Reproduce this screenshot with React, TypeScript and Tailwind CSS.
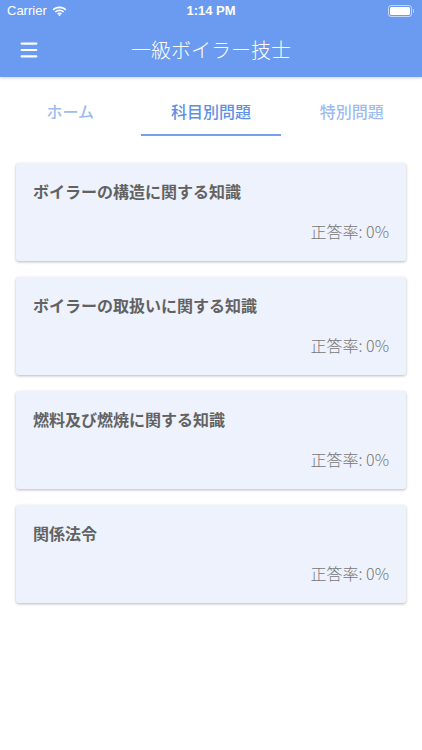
import { Menu } from "lucide-react";

const subjects = [
  "ボイラーの構造に関する知識",
  "ボイラーの取扱いに関する知識",
  "燃料及び燃焼に関する知識",
  "関係法令",
];

const font = {
  fontFamily: '"Noto Sans CJK JP", "Noto Sans", sans-serif',
};

function StatusBar() {
  return (
    <div className="relative flex h-[22px] items-center px-[7px] text-white">
      <div className="flex items-center gap-[5px] text-[13px]" style={{ fontFamily: '"Liberation Sans", sans-serif' }}>
        <span>Carrier</span>
        <svg width="15" height="11" viewBox="0 0 15 11" fill="white">
          <path d="M7.5 2.2c2.2 0 4.2.8 5.7 2.2l1.2-1.2C12.6 1.4 10.2.4 7.5.4S2.4 1.4.6 3.2l1.2 1.2C3.3 3 5.3 2.2 7.5 2.2z" />
          <path d="M7.5 5.2c1.4 0 2.6.5 3.6 1.4l1.2-1.2C11 4.1 9.3 3.4 7.5 3.4S4 4.1 2.7 5.4l1.2 1.2c1-.9 2.2-1.4 3.6-1.4z" />
          <path d="M7.5 8.2c.6 0 1.1.2 1.5.6L7.5 10.3 6 8.8c.4-.4.9-.6 1.5-.6z" />
          <path d="M7.5 6.6c1 0 1.9.4 2.5 1L9 8.6c-.4-.4-.9-.6-1.5-.6s-1.1.2-1.5.6l-1-1c.6-.6 1.5-1 2.5-1z" />
        </svg>
      </div>
      <div
        className="absolute left-0 right-0 text-center text-[13px] font-semibold"
        style={{ fontFamily: '"Liberation Sans", sans-serif' }}
      >
        1:14 PM
      </div>
      <div className="ml-auto flex items-center pr-[1px]">
        <div className="flex h-[12px] w-[24px] items-center rounded-[3px] border border-white/60 p-[1px]">
          <div className="h-full w-full rounded-[1.5px] bg-white" />
        </div>
        <div className="ml-[1px] h-[4px] w-[1.5px] rounded-r bg-white/60" />
      </div>
    </div>
  );
}

export default function App() {
  return (
    <div className="min-h-[750px] w-[422px] bg-white" style={font}>
      <div className="bg-[#6a9bf0] shadow-[0_1px_3px_rgba(0,0,0,0.18)]">
        <StatusBar />
        <div className="relative flex h-[55px] items-center px-[18px]">
          <Menu className="h-[22px] w-[22px] text-white" strokeWidth={2.4} />
          <div className="absolute left-0 right-0 text-center text-[20px] font-light text-white">
            一級ボイラー技士
          </div>
        </div>
      </div>

      <div className="grid grid-cols-3 pt-[21px]">
        {["ホーム", "科目別問題", "特別問題"].map((t, i) => (
          <div key={t} className="flex flex-col items-center">
            <div
              className={
                "h-[36px] pt-[1px] text-[16px] font-medium " +
                (i === 1 ? "text-[#5e8fe6]" : "text-[#9dbcef]")
              }
            >
              {t}
            </div>
            <div
              className={
                "h-[2px] w-full " + (i === 1 ? "bg-[#76a0ea]" : "bg-transparent")
              }
            />
          </div>
        ))}
      </div>

      <div className="flex flex-col gap-[16px] px-[16px] pt-[27px]">
        {subjects.map((s) => (
          <div
            key={s}
            className="flex h-[98px] flex-col rounded-[3px] bg-[#edf2fd] px-[17px] pt-[16px] shadow-[0_1px_3px_rgba(0,0,0,0.28)]"
          >
            <div className="text-[16px] font-semibold text-[#626262]">{s}</div>
            <div className="mt-auto mb-[18px] text-right text-[16px] font-light text-[#777777]">
              正答率: 0%
            </div>
          </div>
        ))}
      </div>
    </div>
  );
}
